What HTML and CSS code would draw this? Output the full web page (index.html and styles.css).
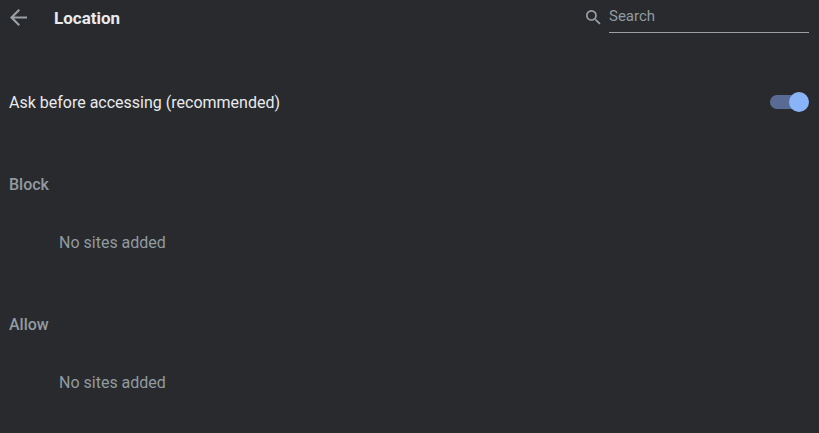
FILE: index.html
```html
<!DOCTYPE html>
<html lang="en">

<head>
    <meta charset="UTF-8">
    <meta name="viewport" content="width=device-width, initial-scale=1.0">
    <title>Location</title>
    <link rel="stylesheet" href="styles.css">
</head>

<body>
    <header class="header">
        <button class="back" type="button" aria-label="Back">
            <svg viewBox="4 4 16 16" width="17" height="17" fill="currentColor">
                <path d="M20 11H7.83l5.59-5.59L12 4l-8 8 8 8 1.41-1.41L7.83 13H20v-2z" />
            </svg>
        </button>
        <h1>Location</h1>
        <div class="search">
            <label for="search" aria-label="Search">
                <svg viewBox="3 3 18 18" width="15" height="15" fill="currentColor">
                    <path d="M15.5 14h-.79l-.28-.27A6.471 6.471 0 0 0 16 9.5 6.5 6.5 0 1 0 9.5 16c1.61 0 3.09-.59 4.23-1.57l.27.28v.79l5 4.99L20.49 19l-4.99-5zm-6 0C7.01 14 5 11.99 5 9.5S7.01 5 9.5 5 14 7.01 14 9.5 11.99 14 9.5 14z" />
                </svg>
            </label>
            <input type="text" id="search" placeholder="Search">
        </div>
    </header>

    <main>
        <div class="setting">
            <label for="ask">Ask before accessing (recommended)</label>
            <input class="toggle" type="checkbox" id="ask" checked>
        </div>

        <section>
            <h2>Block</h2>
            <p>No sites added</p>
        </section>

        <section>
            <h2>Allow</h2>
            <p>No sites added</p>
        </section>
    </main>
</body>

</html>
```
FILE: styles.css
```css
* {
    margin: 0;
    padding: 0;
    box-sizing: border-box;
}

body {
    background-color: #292a2d;
    color: #e8eaed;
    font-family: Roboto, sans-serif;
    font-size: 16px;
    line-height: 20px;
    padding: 0 10px 0 9px;
}

.header {
    display: flex;
    align-items: center;
    height: 36px;
}

.back {
    display: flex;
    justify-content: flex-end;
    width: 18px;
    margin: 0 27px 1px 0;
    background: none;
    border: none;
    color: #9aa0a6;
    cursor: pointer;
}

h1 {
    flex: 1;
    font-size: 17px;
    font-weight: 700;
}

.search {
    display: flex;
    align-items: center;
    gap: 8px;
}

.search label {
    display: flex;
    padding-bottom: 2px;
    color: #9aa0a6;
}

.search input {
    width: 200px;
    height: 30px;
    padding-bottom: 4px;
    background: none;
    border: none;
    border-bottom: 1px solid #9aa0a6;
    outline: none;
    color: #e8eaed;
    font-family: inherit;
    font-size: 15px;
}

.search input::placeholder {
    color: #919ba1;
}

.setting {
    display: flex;
    align-items: center;
    justify-content: space-between;
    padding: 57px 0 62px;
}

.toggle {
    appearance: none;
    display: flex;
    align-items: center;
    justify-content: flex-end;
    width: 34px;
    height: 14px;
    margin: 0 5px 2px 0;
    background-color: #596b94;
    border-radius: 7px;
    cursor: pointer;
}

.toggle::before {
    content: "";
    flex-shrink: 0;
    width: 20px;
    height: 20px;
    margin: 0 -5px;
    background-color: #8ab4f8;
    border-radius: 50%;
}

.toggle:not(:checked) {
    justify-content: flex-start;
}

section {
    color: #919ba1;
    margin-bottom: 62px;
}

h2 {
    font-size: 16px;
    font-weight: 500;
    margin-bottom: 38px;
}

section p {
    padding-left: 50px;
}

section:last-child {
    margin-bottom: 0;
}
```
